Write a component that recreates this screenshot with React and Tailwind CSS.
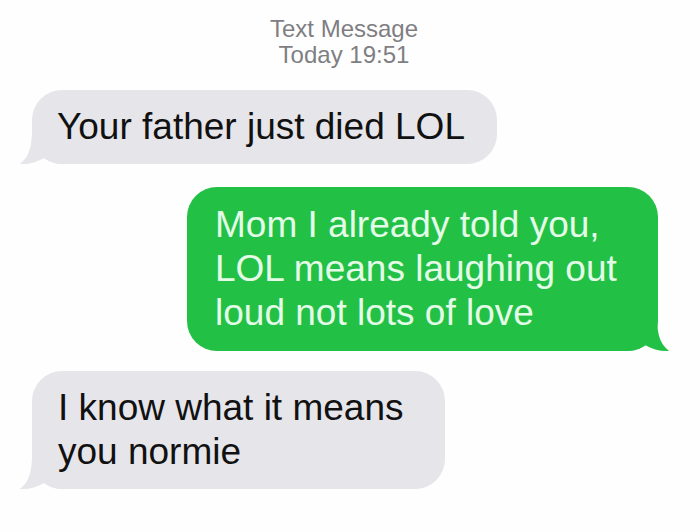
// ── iMessage conversation screenshot ─────────────────────────

function Tail({ side, color }) {
  // bubble tail drawn at the bottom corner of a bubble
  const left = side === 'left';
  return (
    <svg
      className={`absolute bottom-[-1px] ${left ? 'left-[-12px]' : 'right-[-11px] -scale-x-100'}`}
      width="46"
      height="36"
      viewBox="0 0 46 36"
    >
      <path d="M12 0 C12 16 10 27 0 35 C9 35.5 17 33 24 29 C30 33 36 35 46 35 L46 0 Z" fill={color} />
    </svg>
  );
}

function Bubble({ side, children, className = '' }) {
  const left = side === 'left';
  return (
    <div
      className={`relative rounded-[30px] py-[15px] text-[37px] leading-[44px] whitespace-nowrap ${
        left ? 'bg-[#e5e5ea] text-[#111111]' : 'bg-[#22c146] text-[#e4fbe7]'
      } ${className}`}
    >
      <Tail side={side} color={left ? '#e5e5ea' : '#22c146'} />
      <div className="relative">{children}</div>
    </div>
  );
}

export default function App() {
  return (
    <div
      className="w-[700px] h-[532px] bg-[#fefefe] flex flex-col overflow-hidden"
      style={{ fontFamily: '"Liberation Sans", Arial, sans-serif' }}
    >
      <div className="pt-[16px] pr-[12px] text-center text-[24px] leading-[26px] text-[#7e7e83]">
        <div>Text Message</div>
        <div>Today 19:51</div>
      </div>

      <Bubble side="left" className="self-start ml-[32px] mt-[22px] w-[465px] pl-[25px]">
        Your father just died LOL
      </Bubble>

      <Bubble side="right" className="self-end mr-[42px] mt-[23px] w-[471px] pl-[28px] !py-[16px]">
        Mom I already told you,
        <br />
        LOL means laughing out
        <br />
        loud not lots of love
      </Bubble>

      <Bubble side="left" className="self-start ml-[32px] mt-[20px] w-[413px] pl-[26px]">
        I know what it means
        <br />
        you normie
      </Bubble>
    </div>
  );
}
